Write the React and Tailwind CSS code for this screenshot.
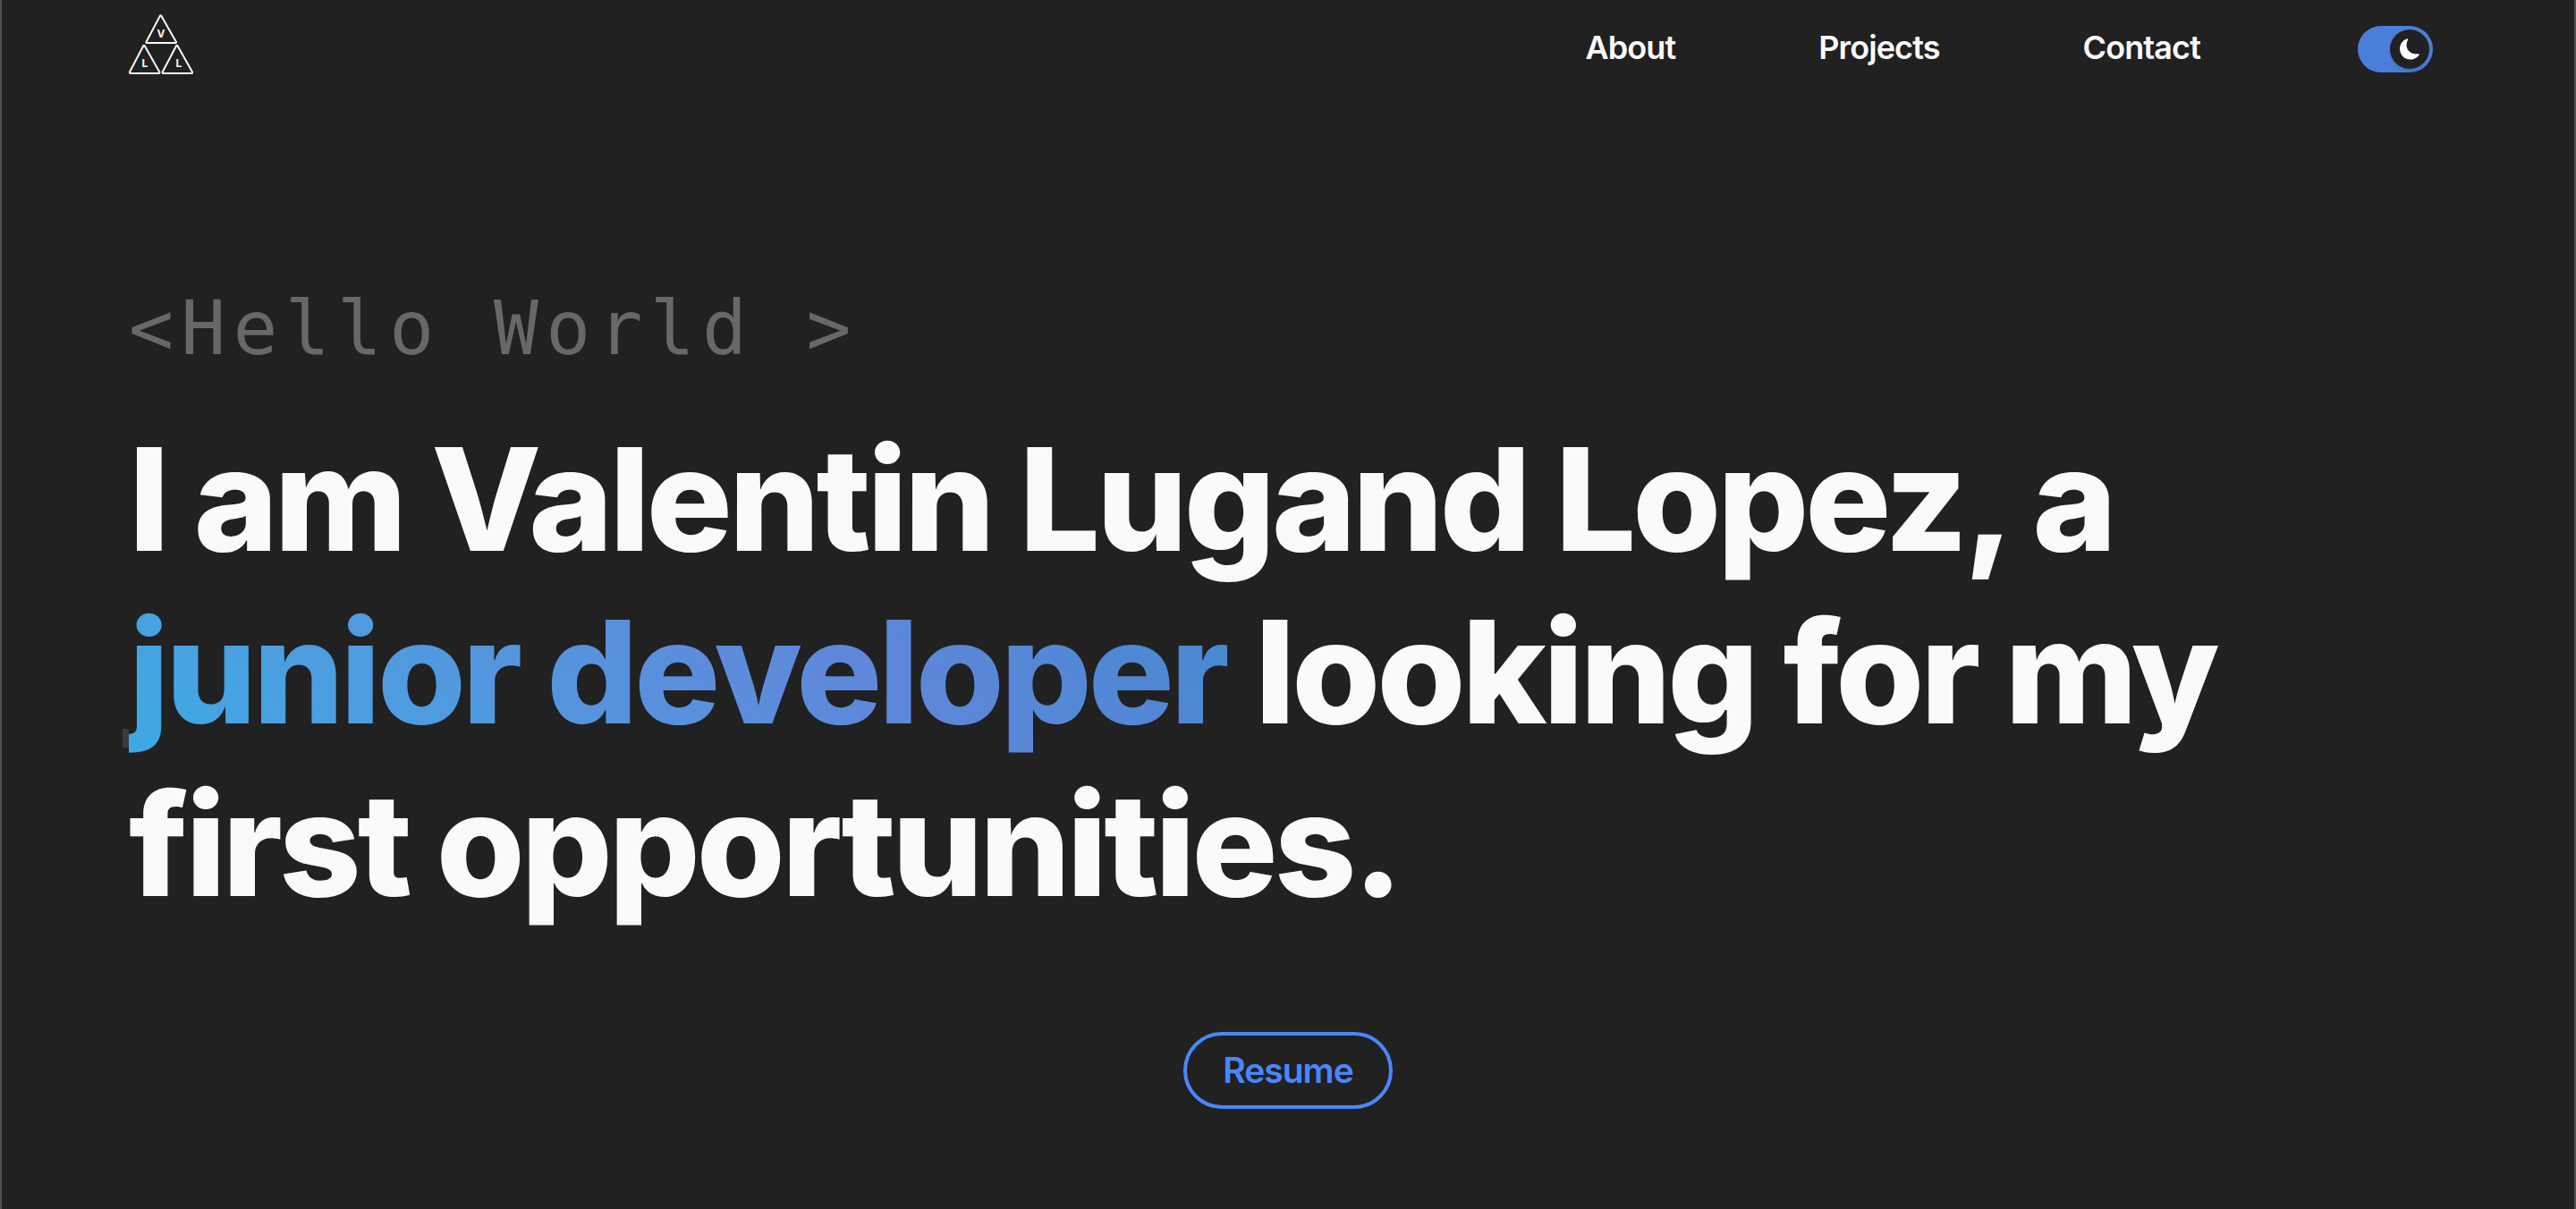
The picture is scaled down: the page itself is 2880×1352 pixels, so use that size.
const links = ["About", "Projects", "Contact"];

function Logo() {
  return (
    <svg width="74" height="68" viewBox="0 0 74 68" fill="none" stroke="#fafafa" strokeWidth="2" strokeLinejoin="round" aria-hidden="true">
      <path d="M37.200 1.500L54 31Q54.200 32 53 32H21.500Q20 32 20.500 31L36 1.500Q36.600 .800 37.200 1.500Z" />
      <path d="M18.600 35L35.300 64.500Q35.700 66 34.500 66H3Q1.400 66 2 64.500L17.400 35Q18 34.300 18.600 35Z" />
      <path d="M55.400 35L72 64.500Q72.500 66 71.300 66H39.700Q38.200 66 38.700 64.500L54.200 35Q54.800 34.300 55.400 35Z" />
      <g fill="#fafafa" stroke="none" fontFamily="Inter, sans-serif" fontSize="12" fontWeight="700" textAnchor="middle">
        <text x="37" y="26">V</text>
        <text x="19" y="59">L</text>
        <text x="57" y="59">L</text>
      </g>
    </svg>
  );
}

function ThemeToggle() {
  return (
    <label className="flex h-[52px] w-[84px] cursor-pointer items-center justify-end rounded-full bg-[#4c7fd9] p-1">
      <input type="checkbox" role="switch" defaultChecked aria-label="Dark mode" className="sr-only" />
      <span className="flex size-11 items-center justify-center rounded-full bg-[#212121] shadow-md">
        <svg width="22" height="24" viewBox="0 0 22 24" fill="#fff" aria-hidden="true">
          <path d="M8.200 .400C3.500 1.500 0 6 0 11.500C0 18 5 23.500 11.500 23.500C16 23.500 19.800 21.300 21.600 18.200C21.900 17.500 21.500 17 20.800 17.200C13.500 18.300 7.500 14 7.500 7.500C7.500 5.300 8 3.500 9.100 1.500C9.400 .800 9 .200 8.200 .400Z" />
        </svg>
      </span>
    </label>
  );
}

export default function App() {
  return (
    <div className="min-h-screen border-x-2 border-[#4f4f4f] bg-[#212121] font-[Inter,sans-serif] text-[#fafafa]">
      <header className="flex items-start justify-between pt-4 pr-[158px] pl-[141px]">
        <a href="#home" aria-label="Home">
          <Logo />
        </a>
        <div className="flex items-start gap-44 pt-[13px]">
          <nav className="flex items-center gap-40 text-[36px] leading-[48px] font-semibold tracking-tight">
            {links.map((name) => (
              <a key={name} href={"#" + name.toLowerCase()}>{name}</a>
            ))}
          </nav>
          <ThemeToggle />
        </div>
      </header>
      <main className="px-[142px] pt-[234px] pb-24">
        <p className="font-['DejaVu_Sans_Mono',monospace] text-[83px] leading-[100px] tracking-widest text-[#686868]">&lt;Hello World &gt;</p>
        <h1 className="mt-11 text-[160px] leading-[193px] font-extrabold tracking-tight">
          I am Valentin Lugand Lopez, a{" "}
          <span className="relative bg-linear-45 from-[#3da9e3] via-[#5f87da] via-65% to-[#4588d2] bg-clip-text text-transparent">
            junior developer
            <i className="absolute bottom-3 -left-[7px] h-[21px] w-[7px] bg-[#3a3a3a]" />
          </span>{" "}
          looking for my first opportunities.
        </h1>
        <div className="mt-[113px] flex justify-center">
          <button className="rounded-full border-4 border-[#4a87ff] px-10 py-4 text-[39px] leading-[46px] font-semibold tracking-tight text-[#4a87ff]">Resume</button>
        </div>
      </main>
    </div>
  );
}
